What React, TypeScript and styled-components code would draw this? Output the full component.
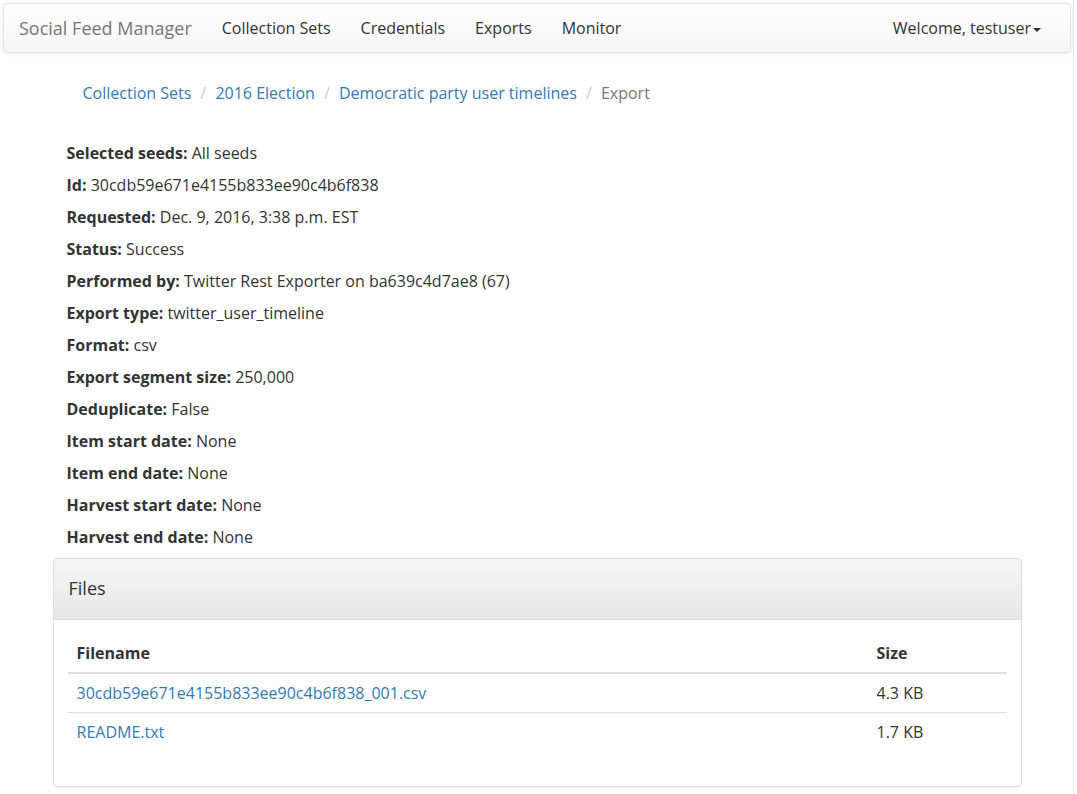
import React from "react";
import styled, { createGlobalStyle } from "styled-components";

const GlobalStyle = createGlobalStyle`
  html, body {
    margin: 0;
    padding: 0;
    background: #fff;
  }
  body {
    font-family: "Open Sans", "Liberation Sans", Arial, sans-serif;
    font-size: 16px;
    line-height: 1.42857;
    color: #333;
  }
  * { box-sizing: border-box; }
`;

const details: [string, string][] = [
  ["Selected seeds:", "All seeds"],
  ["Id:", "30cdb59e671e4155b833ee90c4b6f838"],
  ["Requested:", "Dec. 9, 2016, 3:38 p.m. EST"],
  ["Status:", "Success"],
  ["Performed by:", "Twitter Rest Exporter on ba639c4d7ae8 (67)"],
  ["Export type:", "twitter_user_timeline"],
  ["Format:", "csv"],
  ["Export segment size:", "250,000"],
  ["Deduplicate:", "False"],
  ["Item start date:", "None"],
  ["Item end date:", "None"],
  ["Harvest start date:", "None"],
  ["Harvest end date:", "None"],
];

const files = [
  { name: "30cdb59e671e4155b833ee90c4b6f838_001.csv", size: "4.3 KB" },
  { name: "README.txt", size: "1.7 KB" },
];

function App() {
  return (
    <Page>
      <GlobalStyle />
      <Navbar>
        <Brand href="#">Social Feed Manager</Brand>
        <NavList>
          <NavItem><NavLink href="#">Collection Sets</NavLink></NavItem>
          <NavItem><NavLink href="#">Credentials</NavLink></NavItem>
          <NavItem><NavLink href="#">Exports</NavLink></NavItem>
          <NavItem><NavLink href="#">Monitor</NavLink></NavItem>
        </NavList>
        <NavRight>
          <NavLink href="#">
            Welcome, testuser<Caret />
          </NavLink>
        </NavRight>
      </Navbar>

      <Container>
        <Breadcrumb>
          <Crumb><CrumbLink href="#">Collection Sets</CrumbLink></Crumb>
          <Crumb><CrumbLink href="#">2016 Election</CrumbLink></Crumb>
          <Crumb><CrumbLink href="#">Democratic party user timelines</CrumbLink></Crumb>
          <Crumb active>Export</Crumb>
        </Breadcrumb>

        <Details>
          {details.map(([label, value]) => (
            <DetailRow key={label}>
              <strong>{label}</strong> {value}
            </DetailRow>
          ))}
        </Details>

        <Panel>
          <PanelHeading>Files</PanelHeading>
          <PanelBody>
            <Table>
              <thead>
                <tr>
                  <Th>Filename</Th>
                  <Th size>Size</Th>
                </tr>
              </thead>
              <tbody>
                {files.map((f) => (
                  <tr key={f.name}>
                    <Td><FileLink href="#">{f.name}</FileLink></Td>
                    <Td>{f.size}</Td>
                  </tr>
                ))}
              </tbody>
            </Table>
          </PanelBody>
        </Panel>
      </Container>
    </Page>
  );
}

const Page = styled.div`
  width: 1074px;
  min-height: 794px;
  border-right: 1px solid #e3e3e3;
  padding-top: 3px;
  padding-bottom: 8px;
`;

const Navbar = styled.nav`
  display: flex;
  align-items: center;
  height: 50px;
  margin: 0 2px 20px 3px;
  padding: 0 14px 0 0;
  border: 1px solid #e4e4e4;
  border-radius: 4px;
  background: linear-gradient(to bottom, #ffffff 0%, #f6f6f6 100%);
  box-shadow: inset 0 1px 0 rgba(255, 255, 255, 0.15), 0 1px 5px rgba(0, 0, 0, 0.075);
`;

const Brand = styled.a`
  padding: 0 15px;
  font-size: 18px;
  color: #777;
  text-decoration: none;
  line-height: 48px;
`;

const NavList = styled.ul`
  display: flex;
  list-style: none;
  margin: 0;
  padding: 0;
`;

const NavItem = styled.li`
  display: block;
`;

const NavLink = styled.a`
  display: block;
  padding: 0 15px;
  line-height: 48px;
  color: #333;
  text-decoration: none;
  font-size: 16px;
`;

const NavRight = styled.div`
  margin-left: auto;
`;

const Caret = styled.span`
  display: inline-block;
  width: 0;
  height: 0;
  margin-left: 2px;
  vertical-align: middle;
  border-top: 4px solid #333;
  border-left: 4px solid transparent;
  border-right: 4px solid transparent;
`;

const Container = styled.div`
  width: 970px;
  margin: 0 auto;
`;

const Breadcrumb = styled.ol`
  display: flex;
  list-style: none;
  margin: 0 15px 29px;
  padding: 9px 16px 8px;
`;

interface ICrumb {
  active?: boolean;
}

const Crumb = styled.li<ICrumb>`
  color: ${(props) => (props.active ? "#777" : "inherit")};
  &:not(:first-child)::before {
    content: "/\\00a0";
    padding: 0 5px 0 9px;
    color: #ccc;
  }
`;

const CrumbLink = styled.a`
  color: #337ab7;
  text-decoration: none;
`;

const Details = styled.div`
  padding: 0 15px;
  margin-bottom: 3px;
`;

const DetailRow = styled.p`
  margin: 0 0 10px;
  line-height: 22px;
  strong {
    font-weight: 700;
  }
`;

const Panel = styled.div`
  margin-left: 1px;
  border: 1px solid #ddd;
  border-radius: 4px;
  background: #fff;
  box-shadow: 0 1px 2px rgba(0, 0, 0, 0.05);
`;

const PanelHeading = styled.div`
  height: 61px;
  padding: 0 15px;
  display: flex;
  align-items: center;
  font-size: 18px;
  color: #333;
  border-bottom: 1px solid #ddd;
  border-radius: 3px 3px 0 0;
  background: linear-gradient(to bottom, #f5f5f5 0%, #e8e8e8 100%);
`;

const PanelBody = styled.div`
  padding: 14px 14px 15px;
`;

const Table = styled.table`
  width: 100%;
  border-collapse: collapse;
  margin-bottom: 20px;
`;

interface ITh {
  size?: boolean;
}

const Th = styled.th<ITh>`
  text-align: left;
  font-weight: 700;
  padding: 8px 9px;
  line-height: 22px;
  border-bottom: 2px solid #ddd;
  width: ${(props) => (props.size ? "139px" : "auto")};
`;

const Td = styled.td`
  padding: 8px 9px;
  line-height: 22px;
  border-top: 1px solid #ddd;
  vertical-align: top;
`;

const FileLink = styled.a`
  color: #337ab7;
  text-decoration: none;
`;

export default App;
